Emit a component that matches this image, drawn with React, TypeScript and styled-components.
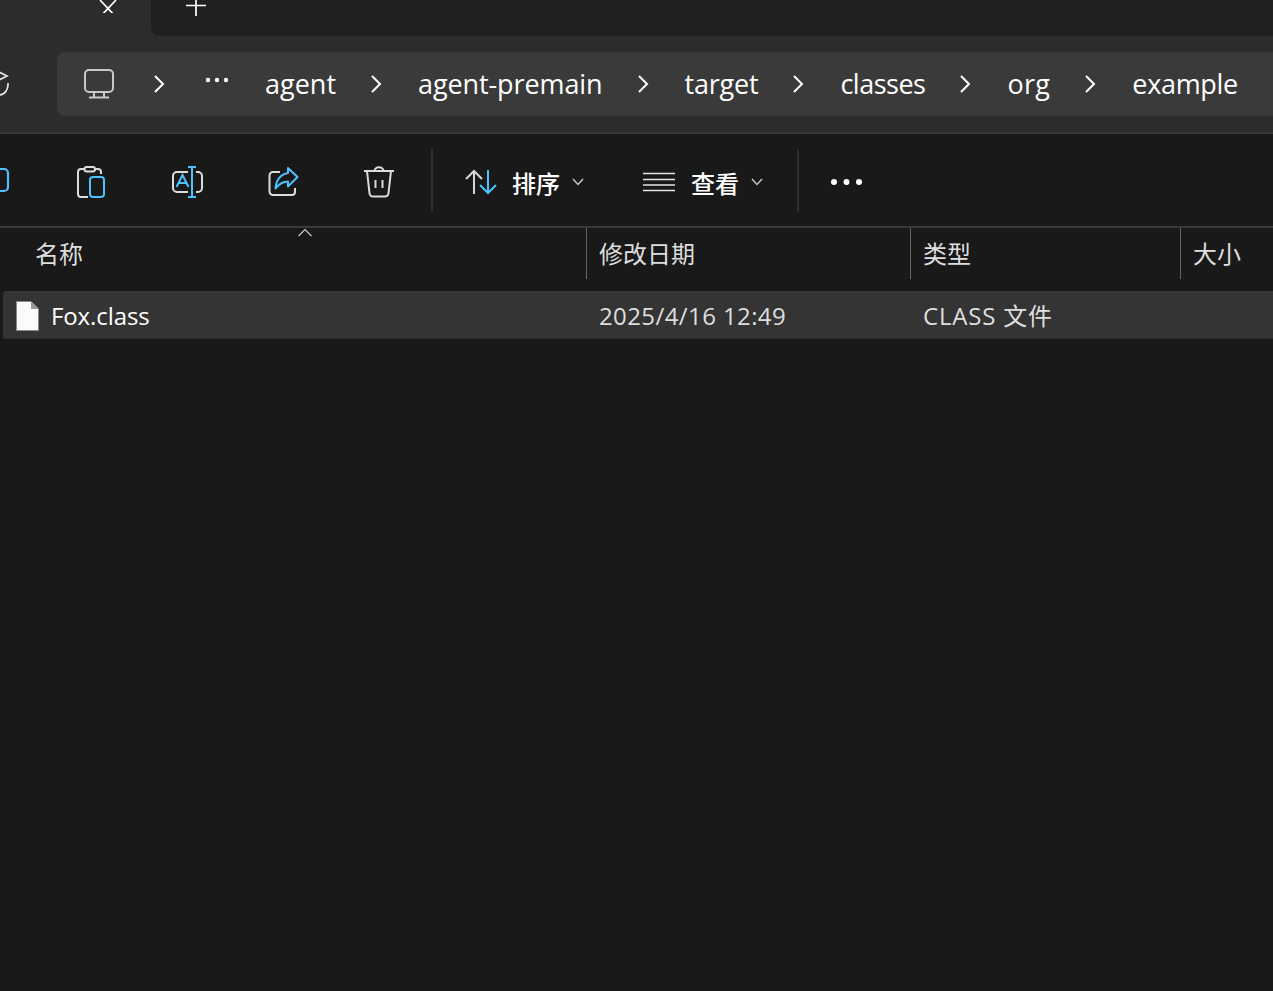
import React from "react";
import styled, { createGlobalStyle } from "styled-components";

const BLUE = "#4cc2ff";
const FONT = `"Open Sans", "Noto Sans", "Noto Sans CJK SC", sans-serif`;

const Global = createGlobalStyle`
  html, body { margin: 0; padding: 0; background: #191919; }
  body { font-family: ${FONT}; overflow: hidden; }
`;

const Page = styled.div`
  width: 1273px;
  height: 991px;
  overflow: hidden;
  background: #191919;
  display: flex;
  flex-direction: column;
  color: #fff;
`;

const TopBand = styled.header`
  height: 132px;
  background: #2c2c2c;
  display: flex;
  flex-direction: column;
  flex: none;
`;

const TabStrip = styled.div`
  height: 36px;
  display: flex;
  flex: none;
`;

const ActiveTab = styled.div`
  width: 151px;
  display: flex;
  align-items: flex-start;
  justify-content: flex-end;
  padding-right: 34px;
  box-sizing: border-box;
`;

const TabRest = styled.div`
  flex: 1;
  background: #202020;
  border-bottom-left-radius: 8px;
  padding-left: 34px;
  display: flex;
  align-items: flex-start;
`;

const AddressRow = styled.div`
  display: flex;
  margin-top: 16px;
  height: 64px;
`;

const RefreshSlot = styled.div`
  width: 57px;
  display: flex;
  align-items: center;
`;

const Breadcrumb = styled.nav`
  flex: 1;
  background: #3a3a3a;
  border-radius: 8px 0 0 8px;
  display: flex;
  align-items: center;
  padding-left: 26px;
  font-size: 27px;
  line-height: 64px;
  color: #fff;
  white-space: nowrap;
`;

const Crumb = styled.span<{ $track: number }>`
  letter-spacing: ${(p) => p.$track}px;
`;

const Chevron = styled.span`
  width: 82px;
  flex: none;
  display: flex;
  justify-content: center;
`;

const HomeChevron = styled(Chevron)`
  width: 90px;
`;

const Ellipsis = styled.span`
  width: 24px;
  flex: none;
  display: flex;
  margin-right: 36px;
`;

const Rule = styled.div`
  height: 2px;
  background: #3a3a3a;
  flex: none;
`;

const Toolbar = styled.div`
  height: 92px;
  flex: none;
  display: flex;
  align-items: center;
  background: #191919;
`;

const IconSlot = styled.span<{ $w: number }>`
  width: ${(p) => p.$w}px;
  flex: none;
  display: flex;
  align-items: center;
  padding-top: 5px;
`;

const Divider = styled.span<{ $ml?: number }>`
  width: 2px;
  height: 63px;
  margin-left: ${(p) => p.$ml ?? 0}px;
  margin-top: 1px;
  background: #2e2e2e;
  flex: none;
`;

const ToolButton = styled.div<{ $ml: number }>`
  display: flex;
  align-items: center;
  margin-left: ${(p) => p.$ml}px;
  padding-top: 4px;
  color: #fff;
`;

const ToolLabel = styled.span<{ $ml: number }>`
  width: 49px;
  margin: 0 11px 0 ${(p) => p.$ml}px;
  font-family: "Noto Sans CJK SC", sans-serif;
  font-size: 24px;
  font-weight: 500;
  white-space: nowrap;
`;

const Header = styled.div`
  position: relative;
  height: 63px;
  flex: none;
  display: grid;
  grid-template-columns: 586px 324px 270px 1fr;
  font-size: 24px;
  color: #dedede;
`;

const HeaderCell = styled.div<{ $first?: boolean }>`
  height: 51px;
  line-height: 50px;
  box-sizing: border-box;
  padding-left: ${(p) => (p.$first ? 35 : 12)}px;
  border-left: ${(p) => (p.$first ? "none" : "1px solid #636363")};
  font-family: "Noto Sans CJK SC", sans-serif;
`;

const SortCaret = styled.svg`
  position: absolute;
  left: 298px;
  top: 0;
`;

const FileRow = styled.div`
  height: 48px;
  margin-left: 3px;
  padding-top: 2px;
  box-sizing: border-box;
  flex: none;
  background: #343434;
  border-bottom: 1px solid #2f2f2f;
  border-radius: 3px 0 0 3px;
  display: grid;
  grid-template-columns: 583px 324px 270px 1fr;
  align-items: center;
  font-size: 24px;
  line-height: 32px;
  color: #dedede;
`;

const NameCell = styled.div`
  display: flex;
  align-items: center;
  padding-left: 13px;
  gap: 12px;
  color: #fff;
  letter-spacing: -0.1px;
`;

const DataCell = styled.div<{ $track: number }>`
  padding-left: 13px;
  white-space: nowrap;
  letter-spacing: ${(p) => p.$track}px;
`;

const Gt = () => (
  <svg width="12" height="20" viewBox="0 0 12 20" fill="none" stroke="#fff" strokeWidth="2">
    <path d="M1 2l8 8-8 8" />
  </svg>
);

const Dots = () => (
  <svg width="24" height="8" viewBox="0 0 24 8" fill="#fff" style={{ marginTop: -8 }}>
    <circle cx="3" cy="4" r="2.2" />
    <circle cx="12" cy="4" r="2.2" />
    <circle cx="21" cy="4" r="2.2" />
  </svg>
);

const Monitor = () => (
  <svg width="32" height="30" viewBox="0 0 32 30" fill="none" stroke="#c9c9c9" strokeWidth="2">
    <rect x="2" y="1" width="28" height="22" rx="4" />
    <path d="M11 23v5M21 23v5M6 28.500h20" />
  </svg>
);

const Caret = () => (
  <svg width="12" height="8" viewBox="0 0 12 8" fill="none" stroke="#c4c4c4" strokeWidth="1.500">
    <path d="M1 1l5 5.500L11 1" />
  </svg>
);

const crumbs: [string, number][] = [
  ["agent-premain", -0.1],
  ["target", -0.2],
  ["classes", -0.5],
  ["org", 0.3],
  ["example", -0.3],
];

export default function App() {
  return (
    <Page>
      <Global />
      <TopBand>
        <TabStrip>
          <ActiveTab>
            <svg width="18" height="13" viewBox="0 -5 18 13" fill="none" stroke="#fff" strokeWidth="1.700">
              <path d="M1 -5L17 12M17 -5L1 12" />
            </svg>
          </ActiveTab>
          <TabRest>
            <svg width="22" height="16" viewBox="0 0 22 16" fill="none" stroke="#fff" strokeWidth="1.700">
              <path d="M1 5.500h20M11 0v16" />
            </svg>
          </TabRest>
        </TabStrip>
        <AddressRow>
          <RefreshSlot>
            <svg width="10" height="26" viewBox="0 0 10 26" fill="none" stroke="#e5e5e5" strokeWidth="1.700">
              <path d="M-1 1l8 4-8 4M8 12C8.500 18 5 24 -1 24" />
            </svg>
          </RefreshSlot>
          <Breadcrumb>
            <Monitor />
            <HomeChevron><Gt /></HomeChevron>
            <Ellipsis><Dots /></Ellipsis>
            <Crumb $track={0}>agent</Crumb>
            {crumbs.map(([c, t]) => (
              <React.Fragment key={c}>
                <Chevron><Gt /></Chevron>
                <Crumb $track={t}>{c}</Crumb>
              </React.Fragment>
            ))}
          </Breadcrumb>
        </AddressRow>
      </TopBand>
      <Rule />
      <Toolbar>
        <IconSlot $w={76}>
          <svg width="10" height="33" viewBox="20 0 10 33" fill="none" stroke={BLUE} strokeWidth="2.200">
            <rect x="4" y="3" width="24" height="22" rx="4" />
          </svg>
        </IconSlot>
        <IconSlot $w={96}>
          <svg width="31" height="33" viewBox="0 0 31 33" fill="none" strokeWidth="2">
            <path d="M8.500 3H5a3 3 0 0 0-3 3v22a3 3 0 0 0 3 3h7M19 3h3a3 3 0 0 1 3 3v2" stroke="#dcdcdc" />
            <rect x="8.500" y="1" width="10.500" height="4.500" rx="2.250" stroke="#dcdcdc" />
            <rect x="14" y="11" width="14" height="20" rx="3" stroke={BLUE} />
          </svg>
        </IconSlot>
        <IconSlot $w={96}>
          <svg width="33" height="33" viewBox="1 0 33 33" fill="none" strokeWidth="2">
            <path d="M17 6H6a4 4 0 0 0-4 4v12a4 4 0 0 0 4 4h11M25 6h2a4 4 0 0 1 4 4v12a4 4 0 0 1-4 4h-2" stroke="#dcdcdc" />
            <path d="M21 1v30M17 1h8M17 31h8M5.500 21L11.500 9l6 12M7.500 17h8" stroke={BLUE} />
          </svg>
        </IconSlot>
        <IconSlot $w={96}>
          <svg width="31" height="33" viewBox="0 0 31 33" fill="none" strokeWidth="2">
            <path d="M12 6H5a3.500 3.500 0 0 0-3.500 3.500V25.500A3.500 3.500 0 0 0 5 29h19a3 3 0 0 0 3-3v-4" stroke="#dcdcdc" />
            <path d="M20 2l9.500 9-9.500 9.500v-5c-6 0-9 2.500-12.500 7C8 14 13 8 20 7z" stroke={BLUE} strokeLinejoin="round" />
          </svg>
        </IconSlot>
        <IconSlot $w={67}>
          <svg width="30" height="33" viewBox="0 0 30 33" fill="none" stroke="#dcdcdc" strokeWidth="2">
            <path d="M0 5h30M10.500 5c0-5 9-5 9 0M3 5l2.500 22a3.500 3.500 0 0 0 3.500 3.500h12a3.500 3.500 0 0 0 3.500-3.500L27 5M11.500 14v8M18.500 14v8" />
          </svg>
        </IconSlot>
        <Divider />
        <ToolButton $ml={32}>
          <svg width="32" height="26" viewBox="0 0 32 26" fill="none" strokeWidth="2">
            <path d="M9 25V2M1 10l8-8 8 8" stroke="#d6d6d6" />
            <path d="M23 1v23M15 16l8 8 8-8" stroke={BLUE} />
          </svg>
          <ToolLabel $ml={15}>排序</ToolLabel>
          <Caret />
        </ToolButton>
        <ToolButton $ml={59}>
          <svg width="32" height="20" viewBox="0 0 32 20" fill="none" stroke="#e4e4e4" strokeWidth="1.700">
            <path d="M0 1.500h32M0 7.500h32M0 13h32M0 18.500h32" />
          </svg>
          <ToolLabel $ml={16}>查看</ToolLabel>
          <Caret />
        </ToolButton>
        <Divider $ml={34} />
        <ToolButton $ml={31}>
          <svg width="34" height="8" viewBox="0 0 34 8" fill="#fff">
            <circle cx="4" cy="4" r="3" />
            <circle cx="16.500" cy="4" r="3" />
            <circle cx="29" cy="4" r="3" />
          </svg>
        </ToolButton>
      </Toolbar>
      <Rule />
      <Header>
        <HeaderCell $first>名称</HeaderCell>
        <HeaderCell>修改日期</HeaderCell>
        <HeaderCell>类型</HeaderCell>
        <HeaderCell>大小</HeaderCell>
        <SortCaret width="14" height="9" viewBox="0 0 14 9" fill="none" stroke="#c8c8c8" strokeWidth="1.200">
          <path d="M0.500 8L7 1.500 13.500 8" />
        </SortCaret>
      </Header>
      <FileRow>
        <NameCell>
          <svg width="23" height="30" viewBox="0 0 23 30">
            <path d="M0.500 0.500H15L22.500 8V29.500H0.500z" fill="#fbfbfb" stroke="#8a8a8a" />
            <path d="M15 0.500V8H22.500z" fill="#9a9a9a" />
          </svg>
          <span>Fox.class</span>
        </NameCell>
        <DataCell $track={0.4}>2025/4/16 12:49</DataCell>
        <DataCell $track={0.8}>CLASS 文件</DataCell>
        <DataCell $track={0} />
      </FileRow>
    </Page>
  );
}
